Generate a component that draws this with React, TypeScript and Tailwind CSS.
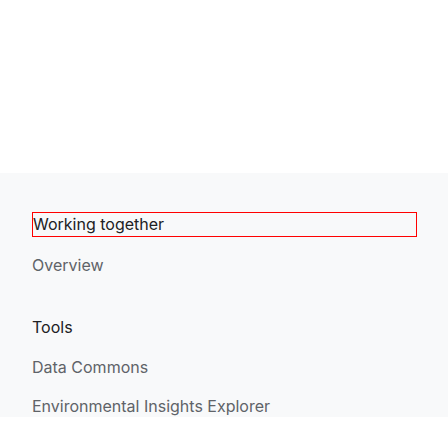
export default function App() {
  const font = { fontFamily: "Inter, 'Noto Sans', sans-serif" };
  return (
    <div className="w-[448px] h-[448px] bg-white overflow-hidden" style={font}>
      <div className="h-[173px]" />
      <nav className="h-[244px] overflow-hidden bg-[#f8f9fa] pl-8 pr-[31px] pt-[39px]">
        <h2 className="h-[25px] border border-[#ff0000] text-[16px] leading-[23px] font-normal text-[#202124]">
          Working together
        </h2>
        <ul className="mt-4 text-[16px] leading-6 text-[#5f6368]">
          <li>Overview</li>
        </ul>
        <h3 className="mt-[38px] text-[16px] leading-6 text-[#202124]">Tools</h3>
        <ul className="mt-4 flex flex-col gap-[15px] text-[16px] leading-6 text-[#5f6368]">
          <li>Data Commons</li>
          <li>Environmental Insights Explorer</li>
        </ul>
      </nav>
    </div>
  );
}
